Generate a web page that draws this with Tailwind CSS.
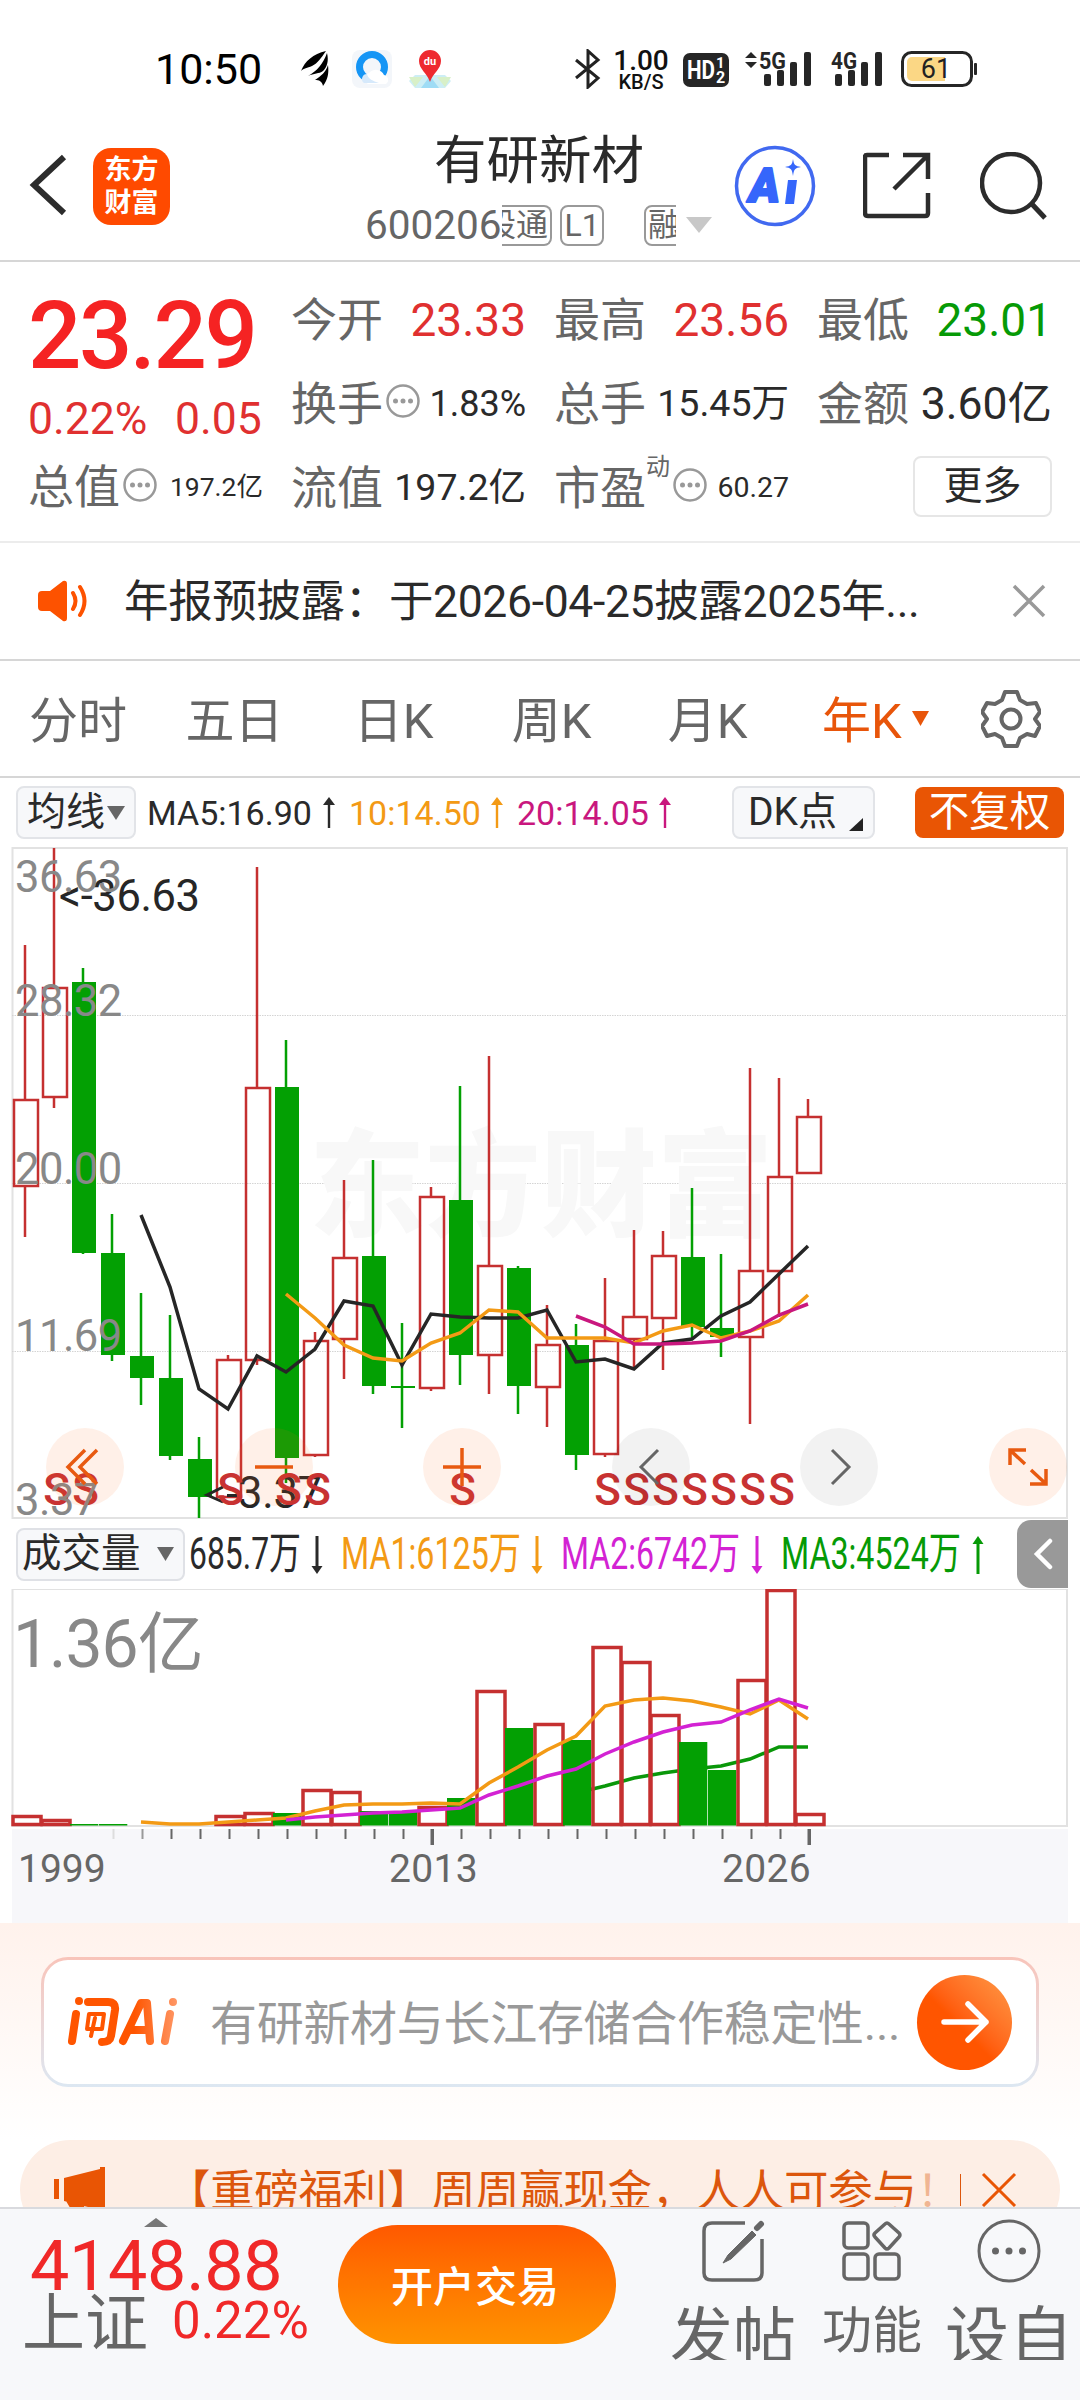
<!DOCTYPE html>
<html lang="zh-CN">
  <head>
    <meta charset="utf-8" />
    <title>有研新材</title>
    <script src="https://cdn.jsdelivr.net/npm/@tailwindcss/browser@4"></script>
  </head>

  <body
    class="w-[1080px] h-[2400px] overflow-hidden bg-white flex flex-col whitespace-nowrap leading-none text-[#2a2a2a] font-[Roboto,'Noto_Sans_CJK_SC',sans-serif]"
  >
    <!-- status bar -->
    <div class="h-[138px] shrink-0 flex items-center pl-[155px] text-black">
      <span class="w-[144px] text-[43px]">10:50</span>
      <svg class="w-8 h-9" viewBox="0 0 32 36">
        <path d="M2 20C6 10 14 3 27 0c-5 7-8 12-14 15-5 2-8 2-11 5z" />
        <path d="M9 25c9-5 15-12 19-23 2 8 0 14-4 18-4 3-9 2-15 5z" />
        <path d="M16 29c6-4 11-8 13-15 1 8 0 14-5 21-1-5-4-6-8-6z" />
      </svg>
      <svg class="w-[42px] h-10 ml-5" viewBox="0 0 42 40">
        <rect x="1" y="1" width="40" height="38" rx="8" fill="#f3f6fa" />
        <circle cx="21" cy="18" r="12.5" fill="none" stroke="#1595f5" stroke-width="7" />
        <path d="M17 35a6 6 0 0 1 1-11 9 9 0 0 1 15 2 5 5 0 0 1 2 9z" fill="#fff" />
        <path d="M13 34a5 5 0 0 1 3-9c1 5 6 7 12 9z" fill="#d6e9fb" />
      </svg>
      <svg class="w-[42px] h-10 ml-4" viewBox="0 0 42 40">
        <path d="M6 26h30l6 6-6 7H6l-6-7z" fill="#cdeef5" />
        <path d="M12 39l9-12 9 12z" fill="#9fdcf5" />
        <path d="M0 28h14l-8 10zM42 28H28l8 10z" fill="#d8f0c8" />
        <path d="M21 33C18 24 10 20 10 12a11 11 0 0 1 22 0c0 8-8 12-11 21z" fill="#ee2a30" />
        <text x="21" y="16" font-size="11" font-weight="700" fill="#fff" text-anchor="middle">du</text>
      </svg>
      <svg class="w-7 h-10 ml-[122px]" viewBox="0 0 28 40">
        <path d="M3 11l22 18-10 9V2l10 9L3 29" fill="none" stroke="#222" stroke-width="3" />
      </svg>
      <div class="w-[56px] ml-[12px] mt-0.5 flex flex-col items-center font-medium text-[#111]">
        <span class="text-[28px] leading-[24px]">1.00</span>
        <span class="text-[20px] leading-[18px]">KB/S</span>
      </div>
      <svg class="w-[46px] h-[34px] ml-[14px] mt-0.5" viewBox="0 0 46 34">
        <rect width="46" height="34" rx="7" fill="#262626" />
        <text x="4" y="26" font-size="25" font-weight="700" fill="#fff" textLength="28" lengthAdjust="spacingAndGlyphs">HD</text>
        <text x="33" y="15" font-size="15" font-weight="700" fill="#fff">1</text>
        <text x="33" y="30" font-size="16" font-weight="700" fill="#fff">2</text>
      </svg>
      <svg class="w-[68px] h-10 ml-4" viewBox="0 0 68 40">
        <path d="M0 9l6-6 6 6zM0 13l6 6 6-6z" fill="#262626" />
        <text x="14" y="20" font-size="24" font-weight="700" textLength="27" lengthAdjust="spacingAndGlyphs" fill="#262626">5G</text>
        <g fill="#262626">
          <rect x="19" y="25" width="7" height="12" rx="2" />
          <rect x="32" y="21" width="7" height="16" rx="2" />
          <rect x="45" y="13" width="7" height="24" rx="2" />
          <rect x="59" y="3" width="7" height="34" rx="2" />
        </g>
      </svg>
      <svg class="w-[54px] h-10 ml-[17px]" viewBox="0 0 54 40">
        <text x="1" y="20" font-size="24" font-weight="700" textLength="26" lengthAdjust="spacingAndGlyphs" fill="#262626">4G</text>
        <g fill="#262626">
          <rect x="5" y="25" width="7" height="12" rx="2" />
          <rect x="18" y="21" width="7" height="16" rx="2" />
          <rect x="31" y="13" width="7" height="24" rx="2" />
          <rect x="45" y="3" width="7" height="34" rx="2" />
        </g>
      </svg>
      <svg class="w-[76px] h-9 ml-[17px]" viewBox="0 0 76 36">
        <rect x="1.500" y="1.500" width="69" height="33" rx="9" fill="#fff" stroke="#262626" stroke-width="3" />
        <path d="M11 6h33v24H11a5 5 0 0 1-5-5V11a5 5 0 0 1 5-5z" fill="#fbd785" />
        <rect x="73" y="12" width="3" height="12" rx="1" fill="#262626" />
        <text x="35" y="27" font-size="27" text-anchor="middle" fill="#222">61</text>
      </svg>
    </div>

    <!-- title bar -->
    <div class="h-[124px] shrink-0 flex items-start border-b-2 border-[#d6d6d6]">
      <svg class="w-[38px] h-[62px] ml-[29px] mt-[16px]" viewBox="0 0 38 62">
        <path d="M35 3L5 31l30 28" fill="none" stroke="#2c2c2c" stroke-width="6" />
      </svg>
      <div
        class="w-[77px] h-[77px] ml-[26px] mt-[10px] rounded-[18px] bg-[#ff4a00] text-white text-[27px] leading-[33px] font-bold flex flex-col items-center justify-center"
      >
        <span>东方</span>
        <span>财富</span>
      </div>
      <div class="w-[350px] ml-[195px] flex flex-col">
        <h1 class="pl-[69px] pt-[3px] text-[52.500px] leading-[40px]">有研新材</h1>
        <div class="flex items-center mt-[23px] text-[#666]">
          <span class="text-[40.500px] w-[137px]">600206</span>
          <div class="flex items-center w-[174px] h-[42px] overflow-hidden text-[32px]">
            <span class="w-[50px] h-[41px] shrink-0 flex items-center justify-end pr-0.5 rounded-r-lg border-2 border-l-0 border-[#999] overflow-hidden"><span class="shrink-0">股通</span></span>
            <span class="w-[44px] h-[41px] shrink-0 ml-2 flex items-center justify-center rounded-lg border-2 border-[#999]">L1</span>
            <span class="w-[44px] h-[41px] shrink-0 ml-[40px] flex items-center pl-0.5 rounded-lg border-2 border-[#999]">融</span>
          </div>
          <svg class="w-[26px] h-4 ml-[10px]" viewBox="0 0 26 16"><path d="M0 0h26L13 16z" fill="#c8c8c8" /></svg>
        </div>
      </div>
      <svg class="w-[82px] h-[82px] ml-[19px] mt-[7px]" viewBox="0 0 82 82">
        <circle cx="41" cy="41" r="38.5" fill="none" stroke="#4169f0" stroke-width="3.5" />
        <text x="15" y="57" font-size="48" font-weight="900" font-style="italic" fill="#3566fb" stroke="#3566fb" stroke-width="2" stroke-linejoin="round" textLength="31" lengthAdjust="spacingAndGlyphs">A</text>
        <path d="M54 35h9l-3 24h-9zM59 14c1 6 2 7 8 8-6 1-7 2-8 9-1-7-2-8-8-9 6-1 7-2 8-8z" fill="#3566fb" />
      </svg>
      <svg class="w-[68px] h-[68px] ml-[47px] mt-[13px]" viewBox="0 0 68 68">
        <path d="M26 4H4q-2 0-2 2v56q0 3 3 3h57q3 0 3-3V42M40 4h25v24M65 4L31 38" fill="none" stroke="#2c2c2c" stroke-width="4.5" />
      </svg>
      <svg class="w-[68px] h-[68px] ml-[49px] mt-[14px]" viewBox="0 0 68 68">
        <circle cx="31" cy="31" r="29" fill="none" stroke="#2c2c2c" stroke-width="4.5" />
        <path d="M51 51l14 15" stroke="#2c2c2c" stroke-width="5" />
      </svg>
    </div>

    <!-- quote figures -->
    <div class="h-[281px] shrink-0 flex border-b-2 border-[#ececec] text-[46px] text-[#666]">
      <div class="w-[263px] ml-[28px] flex flex-col">
        <div class="mt-[27px] text-[#f52323] text-[94px] leading-[94px] font-medium tracking-[-2.500px]">23.29</div>
        <div class="flex mt-[13px] text-[44.500px] leading-[46px] text-[#e03030]">
          <span class="w-[147px]">0.22%</span><span>0.05</span>
        </div>
        <div class="flex items-center w-[235px] h-[60px] mt-[15px]">
          <span>总值</span>
          <svg class="w-9 h-9 shrink-0 -mt-1 ml-0.5" viewBox="0 0 36 36"><circle cx="18" cy="18" r="15.5" fill="none" stroke="#999" stroke-width="2.500" /><g fill="#999"><circle cx="10.500" cy="18" r="2.500" /><circle cx="18" cy="18" r="2.500" /><circle cx="25.500" cy="18" r="2.500" /></g></svg>
          <span class="ml-auto text-[26.500px] text-[#2a2a2a]">197.2亿</span>
        </div>
      </div>
      <div class="grid grid-cols-[263px_263px_235px] grid-rows-[84px_84px_84px] mt-[16px] text-[#2a2a2a]">
        <div class="flex items-center w-[235px]"><span class="text-[#666]">今开</span><span class="ml-auto text-[46px] text-[#e03030]">23.33</span></div>
        <div class="flex items-center w-[235px]"><span class="text-[#666]">最高</span><span class="ml-auto text-[46px] text-[#e03030]">23.56</span></div>
        <div class="flex items-center w-[235px]"><span class="text-[#666]">最低</span><span class="ml-auto text-[46px] text-[#069a06]">23.01</span></div>
        <div class="flex items-center w-[235px]">
          <span class="text-[#666]">换手</span>
          <svg class="w-9 h-9 shrink-0 -mt-1.5 ml-0.5" viewBox="0 0 36 36"><circle cx="18" cy="18" r="15.5" fill="none" stroke="#999" stroke-width="2.500" /><g fill="#999"><circle cx="10.500" cy="18" r="2.500" /><circle cx="18" cy="18" r="2.500" /><circle cx="25.500" cy="18" r="2.500" /></g></svg>
          <span class="ml-auto text-[36px]">1.83%</span>
        </div>
        <div class="flex items-center w-[235px]"><span class="text-[#666]">总手</span><span class="ml-auto text-[37.500px]">15.45万</span></div>
        <div class="flex items-center w-[235px]"><span class="text-[#666]">金额</span><span class="ml-auto text-[44.500px]">3.60亿</span></div>
        <div class="flex items-center w-[235px]"><span class="text-[#666]">流值</span><span class="ml-auto text-[37.500px]">197.2亿</span></div>
        <div class="flex items-center w-[235px]">
          <span class="text-[#666]">市盈</span>
          <span class="text-[24px] text-[#666] -mt-[42px]">动</span>
          <svg class="w-9 h-9 shrink-0 -mt-1.5 ml-0.5" viewBox="0 0 36 36"><circle cx="18" cy="18" r="15.5" fill="none" stroke="#999" stroke-width="2.500" /><g fill="#999"><circle cx="10.500" cy="18" r="2.500" /><circle cx="18" cy="18" r="2.500" /><circle cx="25.500" cy="18" r="2.500" /></g></svg>
          <span class="ml-auto text-[28.500px]">60.27</span>
        </div>
        <div class="flex items-center justify-end w-[235px]">
          <button class="w-[139px] h-[61px] -mt-1 rounded-lg border-2 border-[#e6e6e6] text-[39px] leading-none">更多</button>
        </div>
      </div>
    </div>

    <!-- notice -->
    <div class="h-[118px] shrink-0 flex items-center border-b-2 border-[#d6d6d6]">
      <svg class="w-[52px] h-[42px] ml-[38px]" viewBox="0 0 52 42">
        <path d="M4 11h8L25 1q4-1 4 3v34q0 4-4 3L12 31H4q-4 0-4-4V15q0-4 4-4z" fill="#fd5200" />
        <path d="M35 13q5 8 0 16M42 7q9 14 0 28" fill="none" stroke="#fd5200" stroke-width="4" stroke-linecap="round" />
      </svg>
      <span class="ml-[34px] mt-0.5 w-[888px] text-[44.500px] tracking-[-0.350px]">年报预披露：于2026-04-25披露2025年...</span>
      <svg class="w-[34px] h-[34px]" viewBox="0 0 34 34"><path d="M2 2l30 30M32 2L2 32" stroke="#999" stroke-width="3.5" /></svg>
    </div>

    <!-- period tabs -->
    <div class="h-[117px] shrink-0 flex items-center border-b-2 border-[#d6d6d6] text-[49px] text-[#666]">
      <span class="w-[156px] pt-1.5 text-center">分时</span>
      <span class="w-[157px] pt-1.5 text-center">五日</span>
      <span class="w-[161px] pt-1.5 text-center">日K</span>
      <span class="w-[155px] pt-1.5 text-center">周K</span>
      <span class="w-[157px] pt-1.5 text-center">月K</span>
      <span class="w-[121px] pt-1.5 pl-[36px] text-[#e8550a]">年K</span>
      <svg class="w-[17px] h-[15px] ml-[5px]" viewBox="0 0 17 15"><path d="M0 0h17L8.500 15z" fill="#e8550a" /></svg>
      <svg class="w-[60px] h-[60px] ml-[52px]" viewBox="0 0 60 60" fill="none" stroke="#666" stroke-width="4">
        <path d="M24 3h12l3 8 7 4 9-1 4 9-5 7 5 7-5 10-8-2-7 4-3 8H24l-3-8-7-4-8 2-5-10 5-7-5-7 5-9 8 1 7-4z" stroke-linejoin="round" />
        <circle cx="30" cy="30" r="9.500" />
      </svg>
    </div>

    <!-- moving averages -->
    <div class="h-[69px] shrink-0 flex items-center pl-4 text-[34px]">
      <button class="w-[120px] h-[53px] flex items-center pl-[9px] rounded-lg border-2 border-[#e2e4e8] bg-[#f7f8fa] text-[39px] leading-none">
        均线<svg class="w-[18px] h-[14px] ml-0.5" viewBox="0 0 18 14"><path d="M0 0h18L9 14z" fill="#666" /></svg>
      </button>
      <span class="w-[176px] ml-[11px] text-[34px]">MA5:16.90</span>
      <svg class="w-[12px] h-[31px]" viewBox="0 0 12 31"><path d="M6 0l6 8H7.200v23H4.800V8H0z" fill="#2a2a2a" /></svg>
      <span class="w-[142px] ml-[14px] text-[34px] text-[#f39a15]">10:14.50</span>
      <svg class="w-[12px] h-[31px]" viewBox="0 0 12 31"><path d="M6 0l6 8H7.200v23H4.800V8H0z" fill="#f39a15" /></svg>
      <span class="w-[142px] ml-[14px] text-[34px] text-[#c9177e]">20:14.05</span>
      <svg class="w-[12px] h-[31px]" viewBox="0 0 12 31"><path d="M6 0l6 8H7.200v23H4.800V8H0z" fill="#c9177e" /></svg>
      <button class="w-[143px] h-[53px] ml-[61px] flex items-center pl-[14px] rounded-lg border-2 border-[#e2e4e8] bg-[#f7f8fa] text-[39px] leading-none">
        DK点<svg class="w-[14px] h-[13px] ml-[12px] mt-[24px]" viewBox="0 0 14 13"><path d="M14 0v13H0z" fill="#222" /></svg>
      </button>
      <button class="w-[149px] h-[51px] ml-[40px] rounded-lg bg-[#e95504] text-white text-[40.500px] leading-none">不复权</button>
    </div>

    <!-- candles -->
    <div class="h-[672px] shrink-0">
      <svg id="kline" class="w-[1080px] h-[672px]" viewBox="0 847 1080 672"></svg>
    </div>

    <!-- volume legend -->
    <div class="h-[70px] shrink-0 flex items-center pl-4">
      <button class="w-[169px] h-[53px] flex items-center pl-[4px] rounded-lg border-2 border-[#dfe1e6] bg-[#f7f8fa] text-[39.500px] leading-none">
        成交量<svg class="w-[17px] h-[14px] ml-[16px]" viewBox="0 0 17 14"><path d="M0 0h17L8.500 14z" fill="#666" /></svg>
      </button>
      <svg class="w-[832px] h-[70px]" viewBox="185 1519 832 70" font-size="44">
        <text x="189" y="1569" textLength="112" lengthAdjust="spacingAndGlyphs" fill="#2a2a2a">685.7万</text>
        <text x="341" y="1569" textLength="180" lengthAdjust="spacingAndGlyphs" fill="#f39a15">MA1:6125万</text>
        <text x="561" y="1569" textLength="179" lengthAdjust="spacingAndGlyphs" fill="#d322d3">MA2:6742万</text>
        <text x="781" y="1569" textLength="180" lengthAdjust="spacingAndGlyphs" fill="#069a06">MA3:4524万</text>
        <path d="M315.500 1536h3v30h4l-5.500 8-5.500-8h4z" fill="#2a2a2a" />
        <path d="M535.500 1536h3v30h4l-5.500 8-5.500-8h4z" fill="#f39a15" />
        <path d="M755.500 1536h3v30h4l-5.500 8-5.500-8h4z" fill="#d322d3" />
        <path d="M976.500 1574h3v-30h4l-5.500-8-5.500 8h4z" fill="#069a06" />
      </svg>
      <div class="w-[51px] h-[68px] rounded-l-[14px] bg-[#999] flex items-center justify-center">
        <svg class="w-5 h-8" viewBox="0 0 20 32"><path d="M17 3L4 16l13 13" fill="none" stroke="#fff" stroke-width="4.500" stroke-linecap="round" /></svg>
      </div>
    </div>

    <!-- volume bars -->
    <div class="h-[334px] shrink-0">
      <svg id="volume" class="w-[1080px] h-[334px]" viewBox="0 1589 1080 334"></svg>
    </div>

    <!-- ask AI -->
    <div class="h-[217px] shrink-0 bg-linear-to-b from-[#fff2ec] to-white px-[41px] pt-[34px]">
      <div class="h-[130px] rounded-[27px] p-[3px] bg-linear-to-b from-[#f8c4ba] to-[#dce7f2]">
        <div class="h-full rounded-3xl bg-white flex items-center pl-[23px]">
          <svg class="w-[112px] h-[52px]" viewBox="0 0 112 52">
            <defs>
              <linearGradient id="ask" gradientUnits="userSpaceOnUse" x1="0" x2="112" y1="0" y2="0"><stop offset=".6" stop-color="#ff5500" /><stop offset="1" stop-color="#ff9a6a" /></linearGradient>
            </defs>
            <g fill="none" stroke="url(#ask)" stroke-width="8" stroke-linecap="round" stroke-linejoin="round">
              <path d="M9 18L5 45M21 6h20q8 0 7 8l-4 26q-1 6-9 6M12 5v.1" />
              <path d="M22 18h15l-2 15H20z" stroke-width="4" />
              <path d="M28 22l-4 18" stroke-width="4" />
              <path d="M56 45L74 7h6l3 38M66 34h15" />
              <path d="M103 18l-5 27M106 6v.1" />
            </g>
          </svg>
          <span class="w-[707px] ml-[31px] pt-0.5 text-[47px] tracking-[-0.300px] text-[#999]">有研新材与长江存储合作稳定性...</span>
          <div class="w-[95px] h-[95px] rounded-full bg-linear-to-tr from-[#ff5500] from-45% to-[#ff9a45] flex items-center justify-center">
            <svg class="w-12 h-[42px]" viewBox="0 0 48 42"><path d="M3 21h42M27 3l18 18-18 18" fill="none" stroke="#fff" stroke-width="5.500" stroke-linecap="round" stroke-linejoin="round" /></svg>
          </div>
        </div>
      </div>
    </div>

    <!-- promo, cut off by the bottom bar -->
    <div class="h-[67px] shrink-0 overflow-hidden px-5">
      <div class="h-[100px] rounded-[50px] bg-[#fdeee5] text-[#dc560c] flex items-center pl-[34px]">
        <svg class="w-[52px] h-[50px]" viewBox="0 0 52 50" fill="#e95504"><path d="M0 14h5v20H0zM10 13L46 4V2h5v46h-5v-3L10 36zM12 36h18v10H18z" /></svg>
        <div class="flex w-[800px] ml-[60px] pt-1 text-[44.500px] tracking-[-0.350px]">
          <span>【重磅福利】周周赢现金，人人可参与</span><span class="text-[#f0b592]">！</span>
        </div>
        <div class="w-px h-8 bg-[#dc560c] -ml-[6px]"></div>
        <svg class="w-[36px] h-[36px] ml-[20px]" viewBox="0 0 36 36"><path d="M2 2l32 32M34 2L2 34" stroke="#e95504" stroke-width="3" /></svg>
      </div>
    </div>

    <!-- bottom bar -->
    <div class="h-[193px] shrink-0 flex bg-[#f7f8fa] border-t-2 border-[#d9dade] text-[#666]">
      <div class="w-[338px] flex flex-col">
        <svg class="w-6 h-[9px] ml-[144px] mt-[9px]" viewBox="0 0 24 9"><path d="M12 0l12 9H0z" fill="#777" /></svg>
        <span class="ml-[30px] mt-[4px] text-[70px] leading-[70px] tracking-[-0.300px] text-[#f02828]">4148.88</span>
        <div class="flex items-start -mt-[14px]">
          <span class="ml-[22px] text-[63px] leading-[74px]">上证</span>
          <span class="ml-[24px] mt-[6px] text-[51px] leading-[56px] text-[#f02828]">0.22%</span>
        </div>
      </div>
      <button class="w-[278px] h-[119px] mt-[16px] pt-1.5 pr-1 rounded-full bg-linear-to-b from-[#ff5800] to-[#ff9200] text-white text-[42px] font-medium leading-none">开户交易</button>
      <div class="flex h-[151px] overflow-hidden pt-[10px]">
        <div class="w-[128px] ml-[53px] flex flex-col items-center">
          <svg class="w-16 h-16 shrink-0" viewBox="0 0 64 64" fill="none" stroke="#666" stroke-width="3.500">
            <path d="M44 4H11Q3 4 3 12v42q0 7 8 7h42q8 0 8-7V20" />
            <path d="M51 12L27 36l-5 8 8-4L55 16z" fill="#666" stroke-width="1" />
            <path d="M56 9l4-4" stroke-width="6" stroke-linecap="round" />
          </svg>
          <span class="mt-[17px] text-[63px] leading-[76px]">发帖</span>
        </div>
        <div class="w-[100px] ml-[25px] flex flex-col items-center">
          <svg class="w-[60px] h-16 shrink-0" viewBox="0 0 60 64" fill="none" stroke="#666" stroke-width="3.500">
            <rect x="2" y="4" width="24" height="25" rx="4" />
            <rect x="2" y="35" width="24" height="25" rx="4" />
            <rect x="33" y="35" width="24" height="25" rx="4" />
            <path d="M43 5q2-2 4 0l10 9q2 2 0 4l-10 11q-2 2-4 0L33 18q-2-2 0-4z" />
          </svg>
          <span class="mt-[18px] text-[50px] leading-[60px]">功能</span>
        </div>
        <div class="w-[134px] ml-[20px] flex flex-col items-center">
          <svg class="w-16 h-16 shrink-0" viewBox="0 0 64 64">
            <circle cx="32" cy="32" r="30" fill="none" stroke="#666" stroke-width="3" />
            <g fill="#666"><circle cx="18.500" cy="32" r="3.500" /><circle cx="32" cy="32" r="3.500" /><circle cx="45.500" cy="32" r="3.500" /></g>
          </svg>
          <span class="mt-[17px] text-[64px] leading-[76px]">设自</span>
        </div>
      </div>
    </div>

    <script>
      var RED = "#c53030";
      var GREEN = "#03a003";
      // one candle per year: color, high, body top, body bottom, low
      var candles = [
        ["r", 945, 1100, 1186, 1237], ["r", 848, 988, 1097, 1108], ["g", 968, 982, 1253, 1254],
        ["g", 1214, 1253, 1355, 1361], ["g", 1293, 1356, 1378, 1405], ["g", 1315, 1378, 1456, 1460],
        ["g", 1437, 1459, 1497, 1518], ["r", 1355, 1360, 1497, 1497], ["r", 867, 1088, 1360, 1365],
        ["g", 1040, 1087, 1458, 1483], ["r", 1332, 1341, 1455, 1457], ["r", 1180, 1258, 1339, 1379],
        ["g", 1160, 1256, 1386, 1394], ["g", 1323, 1386, 1388, 1428], ["r", 1187, 1197, 1388, 1391],
        ["g", 1086, 1200, 1355, 1385], ["r", 1056, 1266, 1355, 1394], ["g", 1266, 1268, 1386, 1414],
        ["r", 1305, 1345, 1387, 1427], ["g", 1324, 1345, 1455, 1470], ["r", 1278, 1341, 1454, 1457],
        ["r", 1230, 1317, 1339, 1368], ["r", 1231, 1256, 1318, 1370], ["g", 1188, 1257, 1327, 1339],
        ["g", 1254, 1328, 1337, 1357], ["r", 1068, 1271, 1337, 1424], ["r", 1078, 1177, 1271, 1317],
        ["r", 1099, 1117, 1173, 1174],
      ];
      // tops of the volume bars
      var volumes = [
        1816, 1820, 1824, 1824, 1825, 1825, 1825, 1816, 1813, 1813, 1790, 1792, 1811, 1812,
        1807, 1798, 1691, 1728, 1724, 1740, 1647, 1662, 1715, 1742, 1770, 1680, 1590, 1814,
      ];

      function cx(i) {
        return 25 + 29 * i;
      }
      function line(start, ys, color) {
        var pts = ys.map(function (y, k) {
          return cx(start + k) + "," + y;
        });
        return '<polyline points="' + pts.join(" ") + '" fill="none" stroke="' + color + '" stroke-width="3.5"/>';
      }
      function rect(x, y, w, h, fill, extra) {
        return '<rect x="' + x + '" y="' + y + '" width="' + w + '" height="' + h + '" fill="' + fill + '" ' + (extra || "") + "/>";
      }
      function text(x, y, size, color, str, extra) {
        return '<text x="' + x + '" y="' + y + '" font-size="' + size + '" fill="' + color + '" ' + (extra || "") + ">" + str + "</text>";
      }

      var k = "";
      k += rect(12.5, 848, 1054.5, 670, "none", 'stroke="#e2e2e2" stroke-width="2"');
      [1015.5, 1183.5, 1351.5].forEach(function (y) {
        k += '<path d="M12 ' + y + 'H1067" stroke="#d4d4d4" stroke-dasharray="1.5 1"/>';
      });
      k += text(309, 1227, 116, "#f8f8f8", "东方财富", 'font-weight="900" textLength="464"');
      candles.forEach(function (c, i) {
        var x = cx(i);
        if (c[0] == "r") {
          k += rect(x - 1.25, c[1], 2.5, c[2] - c[1], RED);
          k += rect(x - 1.25, c[3], 2.5, c[4] - c[3], RED);
          k += rect(x - 11, c[2], 24, c[3] - c[2], "none", 'stroke="' + RED + '" stroke-width="2.5"');
        } else {
          k += rect(x - 1.25, c[1], 2.5, c[4] - c[1], GREEN);
          k += rect(x - 11, c[2], 24, c[3] - c[2], GREEN);
        }
      });
      k += line(4, [1215, 1287, 1389, 1409, 1356, 1372, 1349, 1301, 1306, 1365, 1314, 1317, 1318, 1318, 1310, 1362, 1359, 1369, 1343, 1339, 1316, 1302, 1274, 1246], "#262626");
      k += line(9, [1294, 1318, 1345, 1358, 1361, 1343, 1333, 1310, 1312, 1338, 1338, 1338, 1343, 1331, 1325, 1338, 1331, 1321, 1295], "#f39a15");
      k += line(19, [1316, 1327, 1344, 1344, 1343, 1341, 1331, 1315, 1304], "#c9177e");

      k += text(59, 911, 43.5, "#262626", "&lt;-36.63", 'textLength="141"');
      k += text(238, 1508, 43.5, "#262626", "3.37", 'textLength="84"');
      k += '<path d="M223 1487l-16 8 16 7M227 1495.500h10" fill="none" stroke="#262626" stroke-width="3"/>';
      [1, 2, 7, 9, 10, 15, 20, 21, 22, 23, 24, 25, 26].forEach(function (i) {
        k += text(cx(i) + 2.5, 1504.5, 44, "#c83232", "S", 'text-anchor="middle" font-weight="500"');
      });
      [[892, "36.63"], [1016, "28.32"], [1184, "20.00"], [1351, "11.69"], [1514.5, "3.37"]].forEach(function (a) {
        k += text(15, a[0], 43.5, "#888", a[1], 'letter-spacing="-.5"');
      });

      // round chart controls
      [85, 274, 462, 1028].forEach(function (x) {
        k += '<circle cx="' + x + '" cy="1467" r="39" fill="#ff6a1a" fill-opacity=".1"/>';
      });
      [651, 839].forEach(function (x) {
        k += '<circle cx="' + x + '" cy="1467" r="39" fill="#000" fill-opacity=".05"/>';
      });
      k += '<g fill="none" stroke="#e85a10" stroke-width="3.500">';
      k += '<path d="M85 1450l-17 17 17 17M97 1450l-17 17 17 17"/>';
      k += '<path d="M255 1467h38M443 1467h38M462 1448v38"/>';
      k += '<path d="M1010 1465v-15h16M1011 1451l14 13M1046 1469v15h-16M1045 1483l-14-13"/></g>';
      k += '<path d="M658 1450l-17 17 17 17M832 1450l17 17-17 17" fill="none" stroke="#666" stroke-width="3"/>';
      document.getElementById("kline").innerHTML = k;

      var v = "";
      v += rect(12, 1829, 1056, 94, "#f7f7fa");
      v += rect(12.5, 1589, 1054.5, 237, "none", 'stroke="#e2e2e2" stroke-width="2"');
      v += line(19, [1793, 1786, 1778, 1773, 1769, 1766, 1759, 1747, 1747], "#0a970a");
      volumes.forEach(function (y, i) {
        if (y > 1824) return;
        if (candles[i][0] == "r") {
          v += rect(cx(i) - 12, y + 0.5, 28, 1824 - y, "none", 'stroke="' + RED + '" stroke-width="3.5"');
        } else {
          v += rect(cx(i) - 13, y, 28.3, 1825.5 - y, GREEN);
        }
      });
      v += line(4, [1822, 1824, 1824, 1822, 1820, 1818, 1811, 1805, 1804, 1804, 1803, 1804, 1783, 1767, 1750, 1736, 1706, 1700, 1698, 1701, 1707, 1714, 1700, 1719], "#f39a15");
      v += line(9, [1820, 1817, 1815, 1813, 1812, 1810, 1808, 1795, 1786, 1776, 1769, 1754, 1742, 1732, 1725, 1722, 1710, 1699, 1708], "#d322d3");
      for (var t = 3; t < 28; t++) {
        var big = t == 14 || t == 27;
        v += rect(cx(t) + (big ? -0.5 : 0.5), 1829, big ? 3.5 : 2, big ? 16 : 10, t == 3 ? "#ddd" : t == 4 ? "#999" : "#666");
      }
      v += text(13, 1667, 66, "#888", "1.36亿", 'letter-spacing="-1"');
      v += text(18, 1882, 39, "#666", "1999");
      v += text(389, 1882, 39, "#666", "2013", 'letter-spacing=".3"');
      v += text(722, 1882, 39, "#666", "2026", 'letter-spacing=".3"');
      document.getElementById("volume").innerHTML = v;
    </script>
  </body>
</html>
